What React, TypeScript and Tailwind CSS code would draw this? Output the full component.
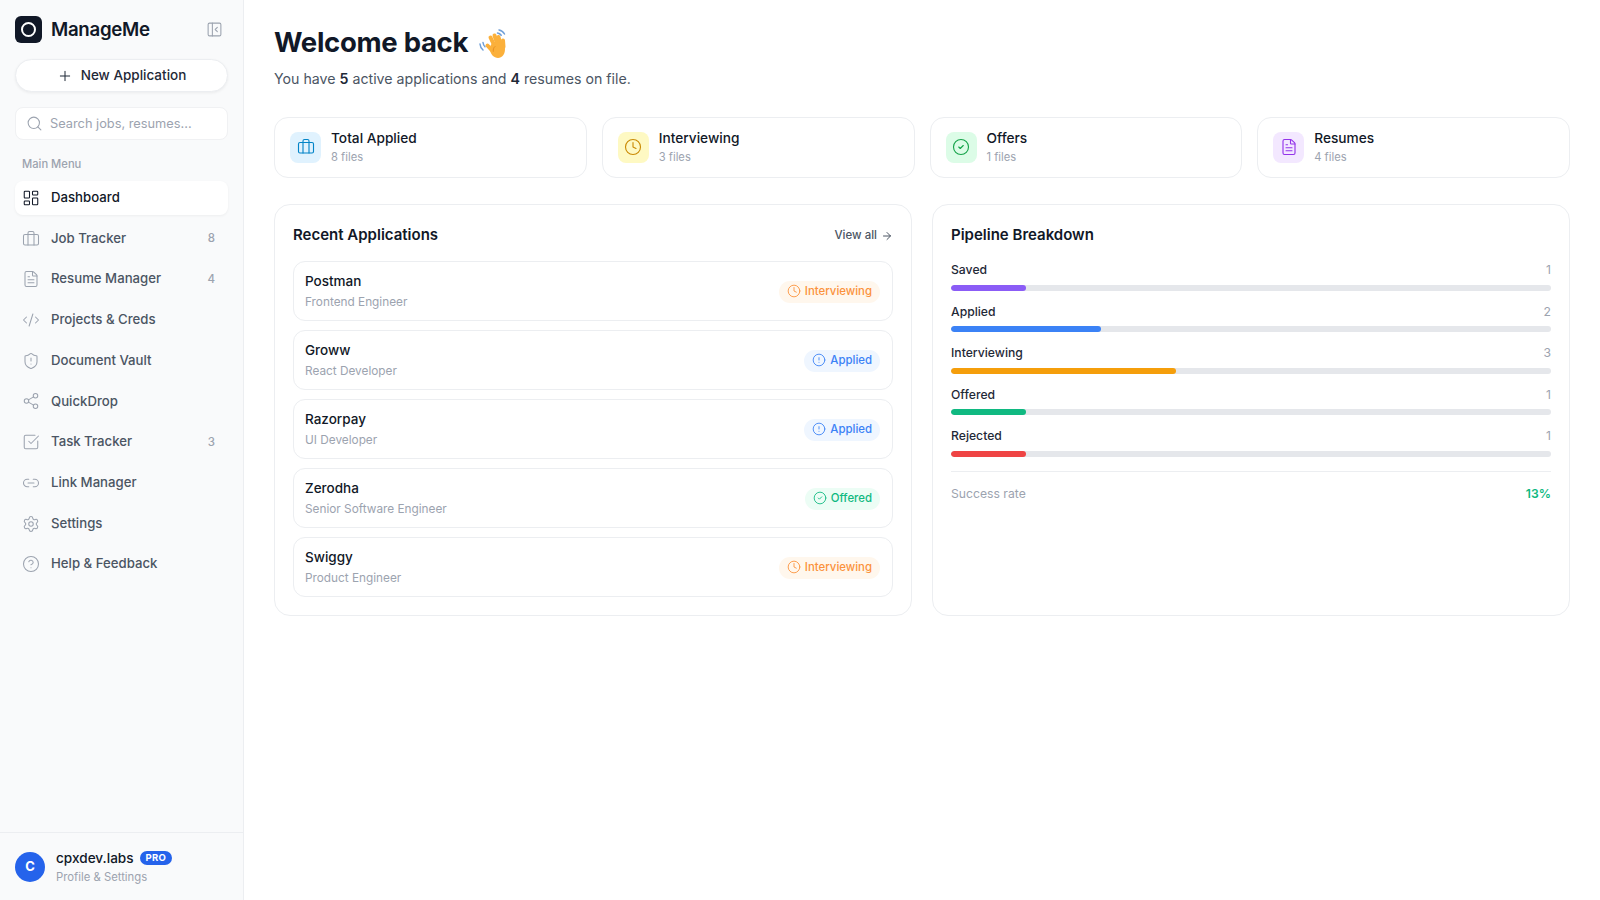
import {
  ArrowRight,
  Briefcase,
  CircleAlert,
  CircleCheck,
  CircleHelp,
  Clock,
  CodeXml,
  FileText,
  LayoutDashboard,
  Link2,
  PanelLeftClose,
  Plus,
  Search,
  Settings,
  Share2,
  ShieldAlert,
  SquareCheckBig,
} from 'lucide-react'

const navItems = [
  { label: 'Dashboard', icon: LayoutDashboard, active: true },
  { label: 'Job Tracker', icon: Briefcase, count: 8 },
  { label: 'Resume Manager', icon: FileText, count: 4 },
  { label: 'Projects & Creds', icon: CodeXml },
  { label: 'Document Vault', icon: ShieldAlert },
  { label: 'QuickDrop', icon: Share2 },
  { label: 'Task Tracker', icon: SquareCheckBig, count: 3 },
  { label: 'Link Manager', icon: Link2 },
  { label: 'Settings', icon: Settings },
  { label: 'Help & Feedback', icon: CircleHelp },
]

const stats = [
  { title: 'Total Applied', sub: '8 files', icon: Briefcase, box: 'bg-[#e0f2fe]', tint: 'text-[#0284c7]' },
  { title: 'Interviewing', sub: '3 files', icon: Clock, box: 'bg-[#fef9c3]', tint: 'text-[#ca8a04]' },
  { title: 'Offers', sub: '1 files', icon: CircleCheck, box: 'bg-[#dcfce7]', tint: 'text-[#16a34a]' },
  { title: 'Resumes', sub: '4 files', icon: FileText, box: 'bg-[#f3e8ff]', tint: 'text-[#9333ea]' },
]

const statusStyles = {
  Interviewing: { icon: Clock, cls: 'bg-[#fff7ed] text-[#fb923c]' },
  Applied: { icon: CircleAlert, cls: 'bg-[#eff6ff] text-[#3b82f6]' },
  Offered: { icon: CircleCheck, cls: 'bg-[#ecfdf5] text-[#10b981]' },
}

const applications: { company: string; role: string; status: keyof typeof statusStyles }[] = [
  { company: 'Postman', role: 'Frontend Engineer', status: 'Interviewing' },
  { company: 'Groww', role: 'React Developer', status: 'Applied' },
  { company: 'Razorpay', role: 'UI Developer', status: 'Applied' },
  { company: 'Zerodha', role: 'Senior Software Engineer', status: 'Offered' },
  { company: 'Swiggy', role: 'Product Engineer', status: 'Interviewing' },
]

const pipeline = [
  { label: 'Saved', count: 1, color: 'bg-[#8b5cf6]' },
  { label: 'Applied', count: 2, color: 'bg-[#3b82f6]' },
  { label: 'Interviewing', count: 3, color: 'bg-[#f59e0b]' },
  { label: 'Offered', count: 1, color: 'bg-[#10b981]' },
  { label: 'Rejected', count: 1, color: 'bg-[#ef4444]' },
]

function WaveHand() {
  return (
    <svg width="28" height="29" viewBox="0 0 28 29" fill="none">
      <path d="M1 15c.2 2.500 1.200 4.500 3 6M4 13.500c.2 1.700.9 3.100 2 4.200" stroke="#6f9fd8" strokeWidth="1.500" strokeLinecap="round" />
      <path d="M20 1c2.300.4 4.300 1.800 5.500 4M18.500 4c1.500.2 2.800 1 3.700 2.300" stroke="#6f9fd8" strokeWidth="1.500" strokeLinecap="round" />
      <g stroke="#fbb03b" strokeWidth="4" strokeLinecap="round">
        <path d="M16 18 11.500 8.500" />
        <path d="M19 17 15.500 6.500" />
        <path d="M22 17 19.500 8" />
        <path d="M24.500 18 24 11.500" />
        <path d="M13.500 22 8.500 16.500" />
      </g>
      <path d="M11 20c0-5 3-7 7-7s8 2 8 7c0 5.500-3 9-7 9s-8-4-8-9z" fill="#fbb03b" />
      <path d="M16 17.500c-1.500 1.200-2 3-1.700 4.800" stroke="#e88f1f" strokeWidth="1" strokeLinecap="round" />
    </svg>
  )
}

function Sidebar() {
  return (
    <aside className="w-[244px] h-full shrink-0 flex flex-col bg-[#f9fafb] border-r border-[#eceef1]">
      <div className="flex-1 px-[15px] pt-[16px]">
        <div className="flex items-center h-[27px]">
          <div className="w-[27px] h-[27px] rounded-[6px] bg-[#111827] flex items-center justify-center">
            <div className="w-[15px] h-[15px] rounded-full border-2 border-white" />
          </div>
          <span className="ml-[9px] pt-[2px] text-[18.700px] leading-none font-semibold text-[#111827] tracking-[-0.3px]">ManageMe</span>
          <PanelLeftClose size={17} strokeWidth={1.5} className="ml-auto mr-[5px] text-[#9ca3af]" />
        </div>
        <button className="mt-[16px] w-full h-[33px] rounded-full bg-white border border-[#eceef1] shadow-[0_1px_3px_rgba(0,0,0,0.06)] flex items-center justify-center gap-[8px] text-[13.500px] font-medium text-[#1f2937]">
          <Plus size={16} strokeWidth={1.5} />
          New Application
        </button>
        <div className="mt-[15px] h-[33px] rounded-[8px] bg-white border border-[#f0f1f3] flex items-center pl-[10px] gap-[7px] text-[12.800px] text-[#9ca3af]">
          <Search size={17} strokeWidth={1.5} />
          Search jobs, resumes...
        </div>
        <div className="mt-[16px] pl-[7px] text-[11.200px] leading-[16px] font-medium text-[#9ca3af]">Main Menu</div>
        <nav className="mt-[9px] flex flex-col gap-[6.700px]">
          {navItems.map(({ label, icon: Icon, active, count }) => (
            <div
              key={label}
              className={`h-[34px] flex items-center pl-[7px] pr-[13px] gap-[11px] rounded-[8px] text-[13.200px] font-medium ${
                active ? 'bg-white shadow-[0_1px_3px_rgba(0,0,0,0.05)] text-[#111827]' : 'text-[#4b5563]'
              }`}
            >
              <Icon size={18} strokeWidth={1.4} className={active ? 'text-[#111827]' : 'text-[#9ca3af]'} />
              <span>{label}</span>
              {count !== undefined && <span className="ml-auto text-[11.500px] text-[#9ca3af]">{count}</span>}
            </div>
          ))}
        </nav>
      </div>
      <div className="h-[68px] border-t border-[#eceef1] px-[15px] flex items-center gap-[11px]">
        <div className="w-[30px] h-[30px] rounded-full bg-[#2563eb] text-white flex items-center justify-center text-[13px] font-bold">C</div>
        <div>
          <div className="flex items-center gap-[6px]">
            <span className="text-[13.600px] leading-[18px] font-medium text-[#111827]">cpxdev.labs</span>
            <span className="h-[14px] px-[6px] rounded-full bg-[#2563eb] text-white text-[9.500px] leading-[14px] font-bold tracking-[0.3px]">PRO</span>
          </div>
          <div className="mt-[2px] text-[11.300px] leading-[16px] text-[#9ca3af]">Profile &amp; Settings</div>
        </div>
      </div>
    </aside>
  )
}

export default function App() {
  return (
    <div className="h-screen flex bg-white overflow-hidden font-['Inter','Liberation_Sans',sans-serif]">
      <Sidebar />
      <main className="flex-1 pl-[30px] pr-[30px] pt-[23px]">
        <h1 className="flex items-center gap-[11px] h-[40px] text-[27.500px] font-bold text-[#111827] tracking-[-0.3px]">
          Welcome back <WaveHand />
        </h1>
        <p className="mt-[6px] text-[14.200px] leading-[20px] text-[#4b5563]">
          You have <strong className="font-semibold text-[#1f2937]">5</strong> active applications and{' '}
          <strong className="font-semibold text-[#1f2937]">4</strong> resumes on file.
        </p>

        <div className="mt-[27.500px] grid grid-cols-4 gap-[15px]">
          {stats.map(({ title, sub, icon: Icon, box, tint }) => (
            <div key={title} className="h-[61.500px] rounded-[14px] border border-[#eceef1] bg-white flex items-center pl-[15px] gap-[10px]">
              <div className={`w-[31px] h-[31px] rounded-[8px] flex items-center justify-center ${box}`}>
                <Icon size={18} strokeWidth={1.5} className={tint} />
              </div>
              <div>
                <div className="text-[13.700px] leading-[20px] font-medium text-[#111827]">{title}</div>
                <div className="mt-[1px] text-[11.200px] leading-[17px] text-[#9ca3af]">{sub}</div>
              </div>
            </div>
          ))}
        </div>

        <div className="mt-[26px] grid grid-cols-2 gap-[20px]">
          <section className="rounded-[16px] border border-[#eceef1] bg-white px-[18px] pt-[19px] pb-[18px]">
            <div className="flex items-center justify-between h-[22px]">
              <h2 className="text-[15px] font-semibold text-[#111827]">Recent Applications</h2>
              <span className="pt-[1px] flex items-center gap-[4px] text-[11.500px] font-medium text-[#4b5563]">
                View all <ArrowRight size={12} />
              </span>
            </div>
            <div className="mt-[15px] flex flex-col gap-[9px]">
              {applications.map(({ company, role, status }) => {
                const { icon: Icon, cls } = statusStyles[status]
                return (
                  <div key={company} className="h-[60px] rounded-[12px] border border-[#eceef1] flex items-center justify-between pl-[11px] pr-[12px]">
                    <div className="pb-[1px]">
                      <div className="text-[13.500px] leading-[20px] font-medium text-[#111827]">{company}</div>
                      <div className="mt-[3px] text-[11.800px] leading-[17px] text-[#9ca3af]">{role}</div>
                    </div>
                    <span className={`mt-[1px] h-[22px] rounded-full pl-[8px] pr-[8px] flex items-center gap-[4px] text-[11.400px] font-medium ${cls}`}>
                      <Icon size={14} strokeWidth={1.5} className="-mt-[1px]" />
                      {status}
                    </span>
                  </div>
                )
              })}
            </div>
          </section>

          <section className="rounded-[16px] border border-[#eceef1] bg-white px-[18px] pt-[19px]">
            <h2 className="h-[22px] flex items-center text-[15px] font-semibold text-[#111827]">Pipeline Breakdown</h2>
            <div className="mt-[15px] flex flex-col gap-[12px]">
              {pipeline.map(({ label, count, color }) => (
                <div key={label}>
                  <div className="flex justify-between text-[12.200px] leading-[18px] font-medium text-[#1f2937]">
                    <span>{label}</span>
                    <span className="font-normal text-[#9ca3af]">{count}</span>
                  </div>
                  <div className="mt-[5.500px] h-[6px] rounded-full bg-[#e5e7eb] overflow-hidden">
                    <div className={`h-full rounded-full ${color}`} style={{ width: `${(count / 8) * 100}%` }} />
                  </div>
                </div>
              ))}
            </div>
            <div className="mt-[14px] border-t border-[#eceef1] pt-[13px] flex justify-between text-[12.200px] leading-[18px]">
              <span className="text-[#9ca3af]">Success rate</span>
              <span className="font-semibold text-[#10b981]">13%</span>
            </div>
          </section>
        </div>
      </main>
    </div>
  )
}
